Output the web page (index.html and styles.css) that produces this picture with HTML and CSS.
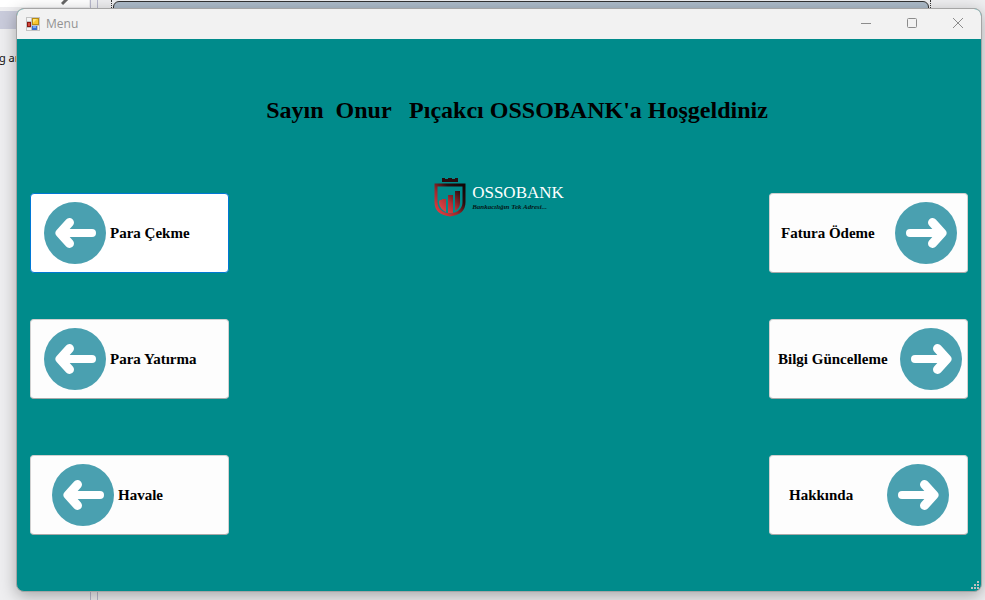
FILE: index.html
```html
<!DOCTYPE html>
<html lang="tr">
<head>
<meta charset="utf-8">
<title>Menu</title>
<link rel="stylesheet" href="styles.css">
</head>
<body>
<div class="desktop" aria-hidden="true">
  <div class="pane-top"></div>
  <div class="pane-tab"></div>
  <div class="pane-edge"></div>
  <div class="pane-text">g ar</div>
  <svg class="pane-tool" width="12" height="6" viewBox="0 0 12 6"><path d="M1 4 L3 2 L7 -2" stroke="#666" stroke-width="3" fill="none"/></svg>
  <div class="form-selection"><div class="form-preview"></div></div>
</div>
<main class="window">
  <header class="titlebar">
    <svg class="app-icon" width="14" height="14" viewBox="0 0 14 14">
      <rect width="14" height="14" fill="#c3c3c3"/>
      <path d="M1 1h4v3H1zM1 11h4v2H1zM12 9h1v4h-1z" fill="#f4f4f4"/>
      <rect x="1" y="5" width="4" height="5" fill="#8c1712"/><rect x="2" y="6" width="2" height="3" fill="#d3473a"/>
      <rect x="6" y="1" width="7" height="7" fill="#b98c12"/><rect x="7" y="2" width="5" height="5" fill="#f7c62f"/><path d="M7 2h4L7 6z" fill="#ffe477"/>
      <rect x="6" y="9" width="5" height="4" fill="#3a6fd0"/><rect x="7" y="9" width="3" height="2" fill="#78a8f2"/>
    </svg>
    <span class="caption">Menu</span>
    <button class="sys" type="button" aria-label="Minimize"><svg width="12" height="12" viewBox="0 0 12 12"><path d="M1 5.500h10"/></svg></button>
    <button class="sys" type="button" aria-label="Maximize"><svg width="12" height="12" viewBox="0 0 12 12"><rect x="1.500" y="0.500" width="9" height="9" rx="1"/></svg></button>
    <button class="sys" type="button" aria-label="Close"><svg width="12" height="12" viewBox="0 0 12 12"><path d="M1 0l10 10M11 0L1 10"/></svg></button>
  </header>
  <section class="client">
    <h1 class="welcome">Sayın  Onur   Pıçakcı OSSOBANK'a Hoşgeldiniz</h1>
    <div class="menu">
      <nav class="choices">
        <button class="choice focused" type="button"><svg class="arrow" viewBox="0 0 62 62"><use href="#left"/></svg>Para Çekme</button>
        <button class="choice" type="button"><svg class="arrow" viewBox="0 0 62 62"><use href="#left"/></svg>Para Yatırma</button>
        <button class="choice apart inset" type="button"><svg class="arrow" viewBox="0 0 62 62"><use href="#left"/></svg>Havale</button>
      </nav>
      <div class="brand">
        <svg class="shield" width="32" height="40" viewBox="0 0 32 40">
          <defs>
            <linearGradient id="rim" x1="0" y1="1" x2="1" y2="0"><stop offset="0" stop-color="#f04044"/><stop offset=".4" stop-color="#a0282c"/><stop offset=".7" stop-color="#2a0c0e"/><stop offset="1" stop-color="#100505"/></linearGradient>
            <linearGradient id="bars" x1="0" y1="1" x2="1" y2="0"><stop offset="0" stop-color="#f04a4c"/><stop offset=".5" stop-color="#b03034"/><stop offset="1" stop-color="#2a0c0e"/></linearGradient>
          </defs>
          <path d="M8 1h3v1h3V1h4v1h3V1h3v4H8z" fill="#2a0c0e"/>
          <path d="M2 8h28v17c0 8-6 12-14 13C8 37 2 33 2 25z" fill="none" stroke="url(#rim)" stroke-width="3"/>
          <path d="M5 24q2-2 3-1V22h4v13c-4-2-7-5-7-11zM14 18h5v18h-5zM21 14h5v12c0 4-2 6-5 8z" fill="url(#bars)"/>
        </svg>
        <div class="wordmark"><strong class="name">OSSOBANK</strong><em class="motto">Bankacılığın Tek Adresi...</em></div>
      </div>
      <nav class="choices">
        <button class="choice trailing" type="button">Fatura Ödeme<svg class="arrow" viewBox="0 0 62 62"><use href="#right"/></svg></button>
        <button class="choice trailing wide" type="button">Bilgi Güncelleme<svg class="arrow" viewBox="0 0 62 62"><use href="#right"/></svg></button>
        <button class="choice trailing apart narrow" type="button">Hakkında<svg class="arrow" viewBox="0 0 62 62"><use href="#right"/></svg></button>
      </nav>
    </div>
    <svg class="grip" width="8" height="8" viewBox="0 0 8 8"><path d="M6 0h2v2H6zM3 3h2v2H3zM6 3h2v2H6zM0 6h2v2H0zM3 6h2v2H3zM6 6h2v2H6z" fill="#bfbfbf"/></svg>
  </section>
</main>
<svg class="symbols" width="0" height="0">
  <symbol id="left" viewBox="0 0 62 62"><circle cx="31" cy="31" r="31" fill="#4aa0b0"/><g fill="none" stroke="#fff" stroke-linecap="round" stroke-linejoin="round"><path d="M48 31H17" stroke-width="8"/><path d="M25.500 20.500L16 31l9.500 10.500" stroke-width="9"/></g></symbol>
  <symbol id="right" viewBox="0 0 62 62"><circle cx="31" cy="31" r="31" fill="#4aa0b0"/><g fill="none" stroke="#fff" stroke-linecap="round" stroke-linejoin="round"><path d="M15 31h31" stroke-width="8"/><path d="M37.500 20.500L47 31l-9.500 10.500" stroke-width="9"/></g></symbol>
</svg>
</body>
</html>
```
FILE: styles.css
```css
* { box-sizing: border-box; }

body {
  margin: 0;
  min-height: 100vh;
  padding: 8px 3px 8px 16px;
  display: flex;
  background: #eeeef0;
  font-family: "Liberation Serif", "Times New Roman", serif;
  overflow: hidden;
}

/* Windows behind the dialog */
.desktop { position: absolute; inset: 0; overflow: hidden; }
.desktop > * { position: absolute; }
.pane-top { left: 0; top: 0; width: 89px; height: 7px; background: #fff; }
.pane-tab { left: 0; top: 11px; width: 89px; height: 18px; background: #c9cbdb; }
.pane-edge { left: 90px; top: 0; bottom: 0; width: 8px; border: 1px solid #b8b8cc; border-width: 0 1px; }
.pane-text { left: -1px; top: 50px; font: 11px/15px "Noto Sans", sans-serif; color: #111; }
.pane-tool { left: 61px; top: 0; }
.form-selection { left: 111px; right: 54px; top: 0; height: 20px; border: 1px dotted #333; border-width: 0 1px; }
.form-preview { margin: 1px 1px 0; height: 19px; border: 1px solid #333; border-radius: 6px 6px 0 0; background: #adbbc9; }

.window {
  position: relative;
  flex: 1;
  display: flex;
  flex-direction: column;
  border: 1px solid #a5a5a5;
  border-radius: 8px;
  overflow: hidden;
  background: #008b8b;
  box-shadow: 0 4px 16px rgba(0, 0, 0, .3);
}

.titlebar { display: flex; align-items: center; height: 30px; padding-left: 9px; background: #f2f2f2; }
.caption { flex: 1; margin-left: 6px; font: 12px/16px "Open Sans", sans-serif; color: #929292; }
.sys { width: 46px; height: 30px; padding: 0; border: 0; background: none; display: flex; align-items: center; justify-content: center; }
.sys svg { fill: none; stroke: #8c8c8c; stroke-width: 1; }

.client { flex: 1; padding: 56px 13px 0; }
.welcome { margin: 0; padding-left: 36px; font-size: 24px; line-height: 30px; text-align: center; white-space: pre; color: #000; }

.menu { display: flex; justify-content: space-between; margin-top: 68px; }
.choices { display: flex; flex-direction: column; gap: 46px; }
.choice {
  display: flex;
  align-items: center;
  gap: 4px;
  width: 199px;
  height: 80px;
  padding: 0 13px;
  border: 1px solid #d0d0d0;
  border-bottom-color: #a9a9a9;
  border-radius: 4px;
  background: #fdfdfd;
  color: #000;
  font: bold 15px/20px "Liberation Serif", "Times New Roman", serif;
}
.focused { border-color: #0078d4; background: #fff; }
.apart { margin-top: 10px; }
.inset { padding: 0 21px; }
.trailing { justify-content: space-between; padding: 0 10px 0 11px; }
.wide { padding: 0 5px 0 8px; }
.narrow { padding: 0 18px 0 19px; }
.arrow { flex: none; width: 62px; height: 62px; }

.brand { display: flex; align-self: flex-start; gap: 6px; margin-top: -16px; }
.wordmark { display: flex; flex-direction: column; padding-top: 6px; }
.name { font-weight: 400; font-size: 17px; line-height: 20px; color: #fff; }
.motto { font-weight: 700; font-size: 7px; line-height: 8px; color: #061818; }

.grip { position: absolute; right: 2px; bottom: 2px; }
.symbols { position: absolute; }
```
